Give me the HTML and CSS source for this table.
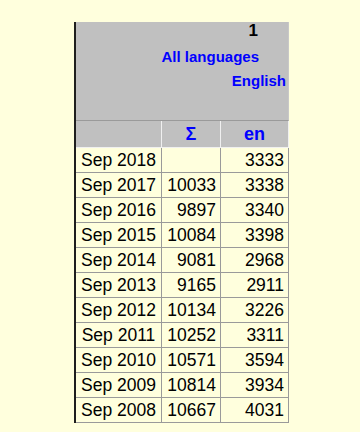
FILE: index.html
```html
<!DOCTYPE html>
<html>
<head>
<meta charset="utf-8">
<link rel="stylesheet" href="styles.css">
</head>
<body>
<div class="wrap">
<table class="stats">
  <colgroup>
    <col class="w1">
    <col class="w2">
    <col class="w3">
  </colgroup>
  <tr>
    <td class="cap" colspan="3">
      <div class="n1">1</div>
      <div class="l2">All languages</div>
      <div class="l3">English</div>
    </td>
  </tr>
  <tr class="head">
    <td class="c1"></td>
    <td class="c2">Σ</td>
    <td class="c3">en</td>
  </tr>
  <tr><td class="c1">Sep 2018</td><td class="c2"></td><td class="c3">3333</td></tr>
  <tr><td class="c1">Sep 2017</td><td class="c2">10033</td><td class="c3">3338</td></tr>
  <tr><td class="c1">Sep 2016</td><td class="c2">9897</td><td class="c3">3340</td></tr>
  <tr><td class="c1">Sep 2015</td><td class="c2">10084</td><td class="c3">3398</td></tr>
  <tr><td class="c1">Sep 2014</td><td class="c2">9081</td><td class="c3">2968</td></tr>
  <tr><td class="c1">Sep 2013</td><td class="c2">9165</td><td class="c3">2911</td></tr>
  <tr><td class="c1">Sep 2012</td><td class="c2">10134</td><td class="c3">3226</td></tr>
  <tr><td class="c1">Sep 2011</td><td class="c2">10252</td><td class="c3">3311</td></tr>
  <tr><td class="c1">Sep 2010</td><td class="c2">10571</td><td class="c3">3594</td></tr>
  <tr><td class="c1">Sep 2009</td><td class="c2">10814</td><td class="c3">3934</td></tr>
  <tr><td class="c1">Sep 2008</td><td class="c2">10667</td><td class="c3">4031</td></tr>
</table>
</div>
</body>
</html>
```

FILE: styles.css
```css
html, body {
  margin: 0;
  padding: 0;
  background: #ffffdd;
}
body {
  font-family: "Liberation Sans", Arial, sans-serif;
  color: #000;
}
.wrap {
  padding: 22px 0 0 74px;
}
.stats {
  border-collapse: separate;
  border-spacing: 0;
  border-left: 2px solid #1e1e1e;
  table-layout: fixed;
  width: 215px;
}
.w1 { width: 86px; }
.w2 { width: 59px; }
.w3 { width: 68px; }
.stats td {
  box-sizing: border-box;
  height: 25px;
  padding: 1px 4px 0 4px;
  font-size: 17.5px;
  line-height: 23px;
  vertical-align: top;
  border-right: 1px solid #9a9a9a;
  border-bottom: 1px solid #9a9a9a;
  white-space: nowrap;
  overflow: hidden;
}
.stats td.cap {
  height: 99px;
  padding: 0;
  background: #c0c0c0;
  border-right: 1px solid #c8c8c8;
  border-bottom: 1px solid #9a9a9a;
  font-weight: bold;
}
.n1 {
  font-size: 17px;
  line-height: 17px;
  text-align: right;
  padding-right: 30px;
  color: #000;
}
.l2 {
  margin-top: 9px;
  font-size: 15px;
  line-height: 18px;
  text-align: right;
  padding-right: 29px;
  color: #0000ff;
}
.l3 {
  margin-top: 6px;
  font-size: 15px;
  line-height: 18px;
  text-align: right;
  padding-right: 2px;
  color: #0000ff;
}
.c1 { text-align: center; }
.c2 { text-align: right; }
.c3 { text-align: right; }
.stats tr.head td {
  height: 26px;
  padding: 0 4px;
  font-size: 18px;
  line-height: 26px;
  background: #c0c0c0;
  color: #0000ff;
  font-weight: bold;
  text-align: center;
  border-right: 1px solid #f0f0f0;
  border-bottom: 1px solid #f0f0f0;
}
```
